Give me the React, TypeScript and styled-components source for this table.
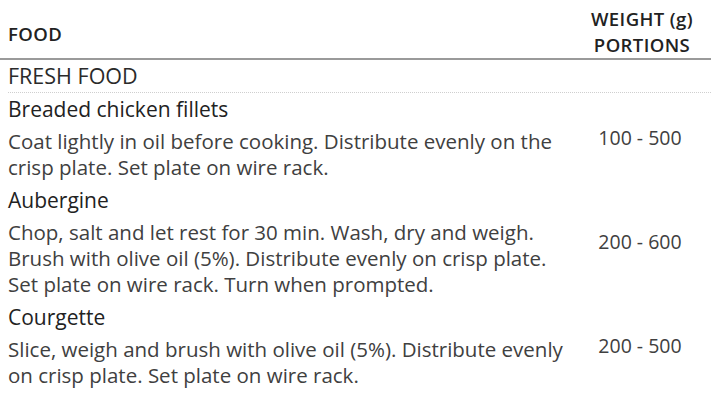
import React from 'react'
import styled, { createGlobalStyle } from 'styled-components'

const GlobalStyle = createGlobalStyle`
    html, body {
        margin: 0;
        padding: 0;
        background: #fff;
    }

    body {
        font-family: 'Open Sans', 'Noto Sans', sans-serif;
        color: #2b2b2b;
    }
`

const Table = styled.div`
    width: 711px;
    display: flex;
    flex-direction: column;
`

const HeaderRow = styled.div`
    display: grid;
    grid-template-columns: 1fr 138px;
    padding: 6px 0 1px 8px;
    border-bottom: 2px solid #9a9a9a;
`

const HeaderCell = styled.div<{ right?: boolean }>`
    font-size: 18.5px;
    font-weight: 600;
    line-height: 25.5px;
    letter-spacing: 0.4px;
    color: #222;
    text-align: ${(props) => (props.right ? 'center' : 'left')};
    align-self: ${(props) => (props.right ? 'start' : 'end')};
    padding: ${(props) => (props.right ? '0' : '0 0 11px 0')};
    white-space: nowrap;
`

const HeaderLine = styled.span`
    display: block;
`

const SectionRow = styled.div`
    margin: 3px 0 0 8px;
    padding-bottom: 3px;
    font-size: 21.5px;
    line-height: 26px;
    color: #2a2a2a;
    border-bottom: 1px dotted #cfcfcf;
`

const FoodRow = styled.div`
    display: grid;
    grid-template-columns: 1fr 138px;
    align-items: center;
    padding: 3px 0 4px 8px;
`

const FoodText = styled.div`
    display: flex;
    flex-direction: column;
    gap: 6px;
`

const FoodName = styled.div`
    font-size: 21px;
    font-weight: 500;
    line-height: 26px;
    color: #222;
`

const FoodNote = styled.p`
    margin: 0;
    font-size: 20.5px;
    line-height: 26px;
    color: #404040;
`

const Amount = styled.div`
    font-size: 19.5px;
    line-height: 26px;
    color: #404040;
    text-align: center;
    padding-right: 4px;
`

interface Food {
    name: string
    note: string
    amount: string
}

const foods: Food[] = [
    {
        name: 'Breaded chicken fillets',
        note: 'Coat lightly in oil before cooking. Distribute evenly on the crisp plate. Set plate on wire rack.',
        amount: '100 - 500',
    },
    {
        name: 'Aubergine',
        note: 'Chop, salt and let rest for 30 min. Wash, dry and weigh. Brush with olive oil (5%). Distribute evenly on crisp plate. Set plate on wire rack. Turn when prompted.',
        amount: '200 - 600',
    },
    {
        name: 'Courgette',
        note: 'Slice, weigh and brush with olive oil (5%). Distribute evenly on crisp plate. Set plate on wire rack.',
        amount: '200 - 500',
    },
]

export default function App() {
    return (
        <>
            <GlobalStyle />
            <Table>
                <HeaderRow>
                    <HeaderCell>FOOD</HeaderCell>
                    <HeaderCell right>
                        <HeaderLine>WEIGHT (g)</HeaderLine>
                        <HeaderLine>PORTIONS</HeaderLine>
                    </HeaderCell>
                </HeaderRow>

                <SectionRow>FRESH FOOD</SectionRow>

                {foods.map((food) => (
                    <FoodRow key={food.name}>
                        <FoodText>
                            <FoodName>{food.name}</FoodName>
                            <FoodNote>{food.note}</FoodNote>
                        </FoodText>
                        <Amount>{food.amount}</Amount>
                    </FoodRow>
                ))}
            </Table>
        </>
    )
}
